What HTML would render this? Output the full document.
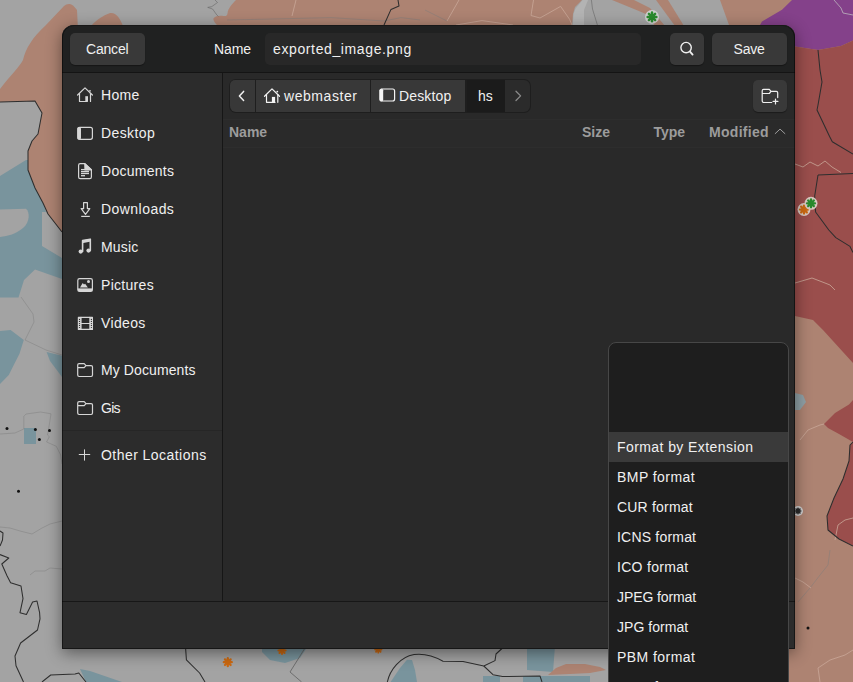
<!DOCTYPE html>
<html><head><meta charset="utf-8">
<style>
*{box-sizing:border-box;margin:0;padding:0}
html,body{width:853px;height:682px;overflow:hidden;background:#a3a3a3;font-family:"Liberation Sans",sans-serif;position:relative}
.a{position:absolute}
#map{position:absolute;left:0;top:0;width:853px;height:682px}
#dlg{position:absolute;left:62px;top:25px;width:733px;height:624px;background:#2c2c2c;border-radius:12px 12px 0 0;box-shadow:0 4px 16px rgba(0,0,0,.45)}
.t{position:absolute;color:#f0f0f0;font-size:14px;white-space:nowrap;line-height:16px}
</style></head><body>
<svg id="map" width="853" height="682" viewBox="0 0 853 682">
<rect x="0" y="0" width="853" height="682" fill="#a3a3a3"/>
<!-- right strip base salmon -->
<polygon fill="#ad8372" points="720,0 853,0 853,682 760,682 760,25 729,25"/>
<!-- purple -->
<polygon fill="#84418a" points="792,0 853,0 853,40.5 841,46 818,50 795,46.6 790,46 760,25 762,21.5 782,9.7"/>
<!-- red top -->
<polygon fill="#9a4e4c" points="795,46.6 818,50 841,46 853,40.5 853,363 823,330 813,320 795,316 780,300 780,46"/>
<!-- red right 2 -->
<polygon fill="#9a4e4c" points="824,424 835,413 849,404.6 853,400 853,442 839,434 828,428"/>
<polygon fill="#9a4e4c" points="853,442 850,445 849,461 843,479 834,498 827,516 828,530 839,539 853,546"/>
<!-- salmon top left A -->
<path fill="#ad8372" d="M69,4 Q72,3 77,10 L78,30 L120,30 L120,240 L62,232 L48,214 L43,203 L35,188 L28,170 L28,151 L32,141 L38,134 L42,113 L35,101 L0,102 L0,89 C10,76 20,66 23,60 C26,48 32,38 46,25 C52,19 58,12 64,6 Q66,4 69,4 Z"/>
<!-- salmon blob 2 -->
<path fill="#ad8372" d="M91,26 C96,20 104,15 110,13 C116,12 120,18 123,26 Z"/>
<!-- salmon top big -->
<path fill="#ad8372" d="M236,0 L582,0 L575,7 L573,14 L572,26 L218,26 C216,24 213,21 213.4,18.5 C215,16 219,15.5 222,15.8 C225,16.2 227.4,16.4 227.6,13 C227.8,9 232,4 236,0 Z"/>
<polygon fill="#b3b3b3" points="582.6,0 588,0 584,10 584,26 572.7,26 573.5,14 575.6,8.5"/>
<!-- salmon bands -->
<polygon fill="#ad8372" points="612,0 634,0 650,8 665,26 655,26 646,14 634,9"/>
<polygon fill="#ad8372" points="656,0 668,0 684,26 675,26"/>
<!-- blue left -->
<polygon fill="#79949d" points="0,176 26,160 28,160 28,170 35,188 43,203 46,212 42,212 42,246 62,258 62,279 35,269.5 24,280 18.5,297.6 0,297.6"/>
<path fill="#a3a3a3" d="M0,209.6 L26,208.7 C30,212 30,222 23,228 C16,234 8,236 0,237 Z"/>
<polygon fill="#79949d" points="0,331 10.6,330 23.8,340 19.4,354 14,364.5 8.8,375 0,384"/>
<polygon fill="#79949d" points="46.6,352 62,355.7 62,377 50,361"/>
<rect fill="#79949d" x="24" y="428" width="12" height="16"/>
<!-- bottom blues -->
<polygon fill="#79949d" points="80,669 90,671 122,682 86,682"/>
<polygon fill="#79949d" points="262,646 308,646 300,658 285,663 270,660 262,652"/>
<polygon fill="#79949d" points="390.6,682 400,668 407,659.7 412,660 415,670 417,682"/>
<polygon fill="#79949d" points="527,646 555,646 553,672 527,670"/>
<rect fill="#79949d" x="483" y="676" width="17" height="6"/>
<rect fill="#79949d" x="523" y="676" width="67" height="6"/>
<polygon fill="#ad8372" points="548,675 556,668 566,664 585,664 600,667 606,670 590,673 570,674"/>
<!-- thin lines -->
<g fill="none" stroke="#7d7d7d" stroke-width="1" stroke-opacity="0.45" stroke-linejoin="round">
<polyline points="227,20 260,19.3 331,17.6 384,21 401,17.6 420,20"/>
<polyline points="215,0 217.5,2.5 211.8,6.6 207.7,7.4 212.6,9 216.7,14.8 218.4,16.4" stroke="#555"/>
<polyline points="425,10 447,21"/>
<polyline points="591.4,0 592.5,9 597.4,25" stroke="#555"/>
<polyline points="21,297 33,314 34,322 30,330 25,340 46,350 62,355"/>
<polyline points="0,434 15,433 23.8,429 23.8,416.4 26,414 40.5,412 51,413.8 48.4,430.5 47.5,435 49.3,436.7 46.6,442 56.3,446.3 60.7,455 62,464"/>
<polyline points="0,527 10,528 20,531 32,534 42,528 50,524 62,521"/>
<polyline points="30,575 35,571 45,571 50,568 62,569"/>
<polyline points="830,550 828,565 820,575 810,588 798,602"/>
</g>
<g fill="none" stroke="#c9a898" stroke-width="1" stroke-opacity="0.8" stroke-linejoin="round">
<polyline points="296,0 292,16"/>
<polyline points="459,0 447,21"/>
<polyline points="456,25 482,20.6 513,25"/>
<polyline points="533.5,0 531,15.5 540,18 560.6,6.4 569.6,19.3 572,25"/>
<polyline points="795,164 803,167 810,162 818,166 825,161 832,167 841,172.5"/>
<polyline points="795,283 812,278 825,283 830,285 835,290"/>
<polyline points="835,540 838,525 845,520 853,518"/>
<polyline points="800,440 808,430 820,425 824,424"/>
<polyline points="853,650 845,655 830,660 818,668 820,682"/>
<polyline points="795,578 803,582 811,588"/>
</g>
<g fill="none" stroke="#c4c4c4" stroke-width="1" stroke-opacity="0.7">
<polyline points="834,0 841,8 843,13 853,15"/>
</g>
<polygon fill="#8fa0a6" points="795,393 803,395 806,402 800,410 795,410"/>
<!-- black lines -->
<g fill="none" stroke="#2e2e2e" stroke-width="1.05" stroke-linejoin="round">
<polyline points="0,102 35,101 42,113 38,134 32,141 28,151 28,170 35,188 43,203 48,214 62,232"/>
<polyline points="0,531 3,533 2.5,540 0,546"/>
<polyline points="0,554.6 8.8,558 1.8,564 7,575.7 10.6,582.7 21,586 23,598.6 20,612.7 26.4,614.4 32.6,602 37,601 39.6,612.7 40,618.8 37.5,630 20.6,643 15,656 16,665.7 23.5,682"/>
<polyline points="42,682 50.7,675 75,674 78.8,673 86,682"/>
<polyline points="185.6,648 186.4,659.8 199.6,673 205,682"/>
<path d="M387.3,682 C390,670 400,657 414,654.6 C422,653.6 432,655 443,661.3 L463,661.6 L483.8,666 L495,660.6 L496,654 L502.5,648"/>
<polyline points="483.8,666 493,674.7 502.5,676.6 540,676 542,682"/>
<polyline points="398,0 399,6 391,9.4 384,25"/>
<polyline points="818,50 820,70 822,82 818,105 817,110 829.6,136.4 832.3,141.7 853,154"/>
<polyline points="818,175 853,173.4"/>
<polyline points="818,175 814.7,196 815.6,212 828.8,230 835.8,237.6 850,246.4 853,252.6"/>
<polyline points="853,442 850,445 849,461 843,479 834,498 827,516 828,530 839,539 853,546"/>
</g>
<g fill="none" stroke="#6e6e6e" stroke-width="1">
<polyline points="305,648 290,672 301.6,682"/>
</g>
<!-- asterisks -->
<circle cx="227.8" cy="662.2" r="2.75" fill="#cc6a12"/><g stroke="#cc6a12" stroke-width="2.25" stroke-linecap="round"><line x1="227.8" y1="662.2" x2="231.80" y2="662.20"/><line x1="227.8" y1="662.2" x2="230.63" y2="665.03"/><line x1="227.8" y1="662.2" x2="227.80" y2="666.20"/><line x1="227.8" y1="662.2" x2="224.97" y2="665.03"/><line x1="227.8" y1="662.2" x2="223.80" y2="662.20"/><line x1="227.8" y1="662.2" x2="224.97" y2="659.37"/><line x1="227.8" y1="662.2" x2="227.80" y2="658.20"/><line x1="227.8" y1="662.2" x2="230.63" y2="659.37"/></g>
<circle cx="282" cy="650.5" r="2.48" fill="#cc6a12"/><g stroke="#cc6a12" stroke-width="2.02" stroke-linecap="round"><line x1="282" y1="650.5" x2="285.60" y2="650.50"/><line x1="282" y1="650.5" x2="284.55" y2="653.05"/><line x1="282" y1="650.5" x2="282.00" y2="654.10"/><line x1="282" y1="650.5" x2="279.45" y2="653.05"/><line x1="282" y1="650.5" x2="278.40" y2="650.50"/><line x1="282" y1="650.5" x2="279.45" y2="647.95"/><line x1="282" y1="650.5" x2="282.00" y2="646.90"/><line x1="282" y1="650.5" x2="284.55" y2="647.95"/></g>
<circle cx="378.3" cy="649.5" r="2.20" fill="#cc6a12"/><g stroke="#cc6a12" stroke-width="1.80" stroke-linecap="round"><line x1="378.3" y1="649.5" x2="381.50" y2="649.50"/><line x1="378.3" y1="649.5" x2="380.56" y2="651.76"/><line x1="378.3" y1="649.5" x2="378.30" y2="652.70"/><line x1="378.3" y1="649.5" x2="376.04" y2="651.76"/><line x1="378.3" y1="649.5" x2="375.10" y2="649.50"/><line x1="378.3" y1="649.5" x2="376.04" y2="647.24"/><line x1="378.3" y1="649.5" x2="378.30" y2="646.30"/><line x1="378.3" y1="649.5" x2="380.56" y2="647.24"/></g>
<circle cx="652" cy="16.9" r="7" fill="#cfcfcf"/><circle cx="652" cy="16.9" r="3.03" fill="#2a8a2e"/><g stroke="#2a8a2e" stroke-width="2.48" stroke-linecap="round"><line x1="652" y1="16.9" x2="656.40" y2="16.90"/><line x1="652" y1="16.9" x2="655.11" y2="20.01"/><line x1="652" y1="16.9" x2="652.00" y2="21.30"/><line x1="652" y1="16.9" x2="648.89" y2="20.01"/><line x1="652" y1="16.9" x2="647.60" y2="16.90"/><line x1="652" y1="16.9" x2="648.89" y2="13.79"/><line x1="652" y1="16.9" x2="652.00" y2="12.50"/><line x1="652" y1="16.9" x2="655.11" y2="13.79"/></g>
<circle cx="804" cy="209.5" r="6.5" fill="#d8c8c0"/><circle cx="804" cy="209.5" r="2.75" fill="#cc6a12"/><g stroke="#cc6a12" stroke-width="2.25" stroke-linecap="round"><line x1="804" y1="209.5" x2="808.00" y2="209.50"/><line x1="804" y1="209.5" x2="806.83" y2="212.33"/><line x1="804" y1="209.5" x2="804.00" y2="213.50"/><line x1="804" y1="209.5" x2="801.17" y2="212.33"/><line x1="804" y1="209.5" x2="800.00" y2="209.50"/><line x1="804" y1="209.5" x2="801.17" y2="206.67"/><line x1="804" y1="209.5" x2="804.00" y2="205.50"/><line x1="804" y1="209.5" x2="806.83" y2="206.67"/></g>
<circle cx="811" cy="203.3" r="6.5" fill="#d8c8c0"/><circle cx="811" cy="203.3" r="2.75" fill="#2a8a2e"/><g stroke="#2a8a2e" stroke-width="2.25" stroke-linecap="round"><line x1="811" y1="203.3" x2="815.00" y2="203.30"/><line x1="811" y1="203.3" x2="813.83" y2="206.13"/><line x1="811" y1="203.3" x2="811.00" y2="207.30"/><line x1="811" y1="203.3" x2="808.17" y2="206.13"/><line x1="811" y1="203.3" x2="807.00" y2="203.30"/><line x1="811" y1="203.3" x2="808.17" y2="200.47"/><line x1="811" y1="203.3" x2="811.00" y2="199.30"/><line x1="811" y1="203.3" x2="813.83" y2="200.47"/></g>
<circle cx="798" cy="511" r="5" fill="#cfcfcf"/><circle cx="798" cy="511" r="1.93" fill="#2a2a2a"/><g stroke="#2a2a2a" stroke-width="1.57" stroke-linecap="round"><line x1="798" y1="511" x2="800.80" y2="511.00"/><line x1="798" y1="511" x2="799.98" y2="512.98"/><line x1="798" y1="511" x2="798.00" y2="513.80"/><line x1="798" y1="511" x2="796.02" y2="512.98"/><line x1="798" y1="511" x2="795.20" y2="511.00"/><line x1="798" y1="511" x2="796.02" y2="509.02"/><line x1="798" y1="511" x2="798.00" y2="508.20"/><line x1="798" y1="511" x2="799.98" y2="509.02"/></g>
<g fill="#111">
<circle cx="7" cy="428.5" r="1.5"/><circle cx="35.4" cy="429.5" r="1.5"/><circle cx="49.5" cy="430.5" r="1.5"/><circle cx="39.4" cy="439.4" r="1.5"/><circle cx="18.5" cy="491.3" r="1.5"/><circle cx="808" cy="628" r="1.5"/>
</g>
</svg>
<div id="dlg"></div>
<div class="a" style="left:62px;top:25px;width:733px;height:47px;background:#202121;border-radius:12px 12px 0 0;box-shadow:inset 0 2px 0 -1px #303030"></div>
<div class="a" style="left:62px;top:72px;width:733px;height:1px;background:#141414;"></div>
<div class="a" style="left:70px;top:33px;width:75px;height:32px;background:#393939;border-radius:5px;box-shadow:0 1px 1px rgba(0,0,0,.35)"></div>
<div class="t" style="left:86px;top:41px;letter-spacing:-0.2px">Cancel</div>
<div class="t" style="left:214px;top:41px;letter-spacing:-0.1px">Name</div>
<div class="a" style="left:265px;top:33px;width:376px;height:32px;background:#282828;border-radius:5px"></div>
<div class="t" style="left:273px;top:41px;letter-spacing:0.62px">exported_image.png</div>
<div class="a" style="left:670px;top:33px;width:34px;height:32px;background:#393939;border-radius:5px;box-shadow:0 1px 1px rgba(0,0,0,.35)"></div>
<div class="a" style="left:712px;top:33px;width:75px;height:32px;background:#393939;border-radius:5px;box-shadow:0 1px 1px rgba(0,0,0,.35)"></div>
<div class="t" style="left:733.5px;top:41px;letter-spacing:-0.2px">Save</div>
<div class="a" style="left:62px;top:73px;width:160px;height:528px;background:#2c2c2c;"></div>
<div class="a" style="left:222px;top:73px;width:1px;height:528px;background:#161616;"></div>
<div class="a" style="left:62px;top:430px;width:160px;height:1px;background:#262626;"></div>
<div class="t" style="left:101px;top:87px;letter-spacing:0.35px">Home</div>
<div class="t" style="left:101px;top:125px;letter-spacing:0.4px">Desktop</div>
<div class="t" style="left:101px;top:163px;letter-spacing:0.27px">Documents</div>
<div class="t" style="left:101px;top:201px;letter-spacing:0.45px">Downloads</div>
<div class="t" style="left:101px;top:239px;letter-spacing:0.15px">Music</div>
<div class="t" style="left:101px;top:277px;letter-spacing:0.3px">Pictures</div>
<div class="t" style="left:101px;top:315px;letter-spacing:0.35px">Videos</div>
<div class="t" style="left:101px;top:362px;letter-spacing:0.1px">My Documents</div>
<div class="t" style="left:101px;top:400px;letter-spacing:-0.7px">Gis</div>
<div class="t" style="left:101px;top:447px;letter-spacing:0.45px">Other Locations</div>
<div class="a" style="left:223px;top:73px;width:572px;height:528px;background:#292929;"></div>
<div class="a" style="left:229px;top:79px;width:302px;height:34px;background:#1e1e1e;border-radius:7px"></div>
<div class="a" style="left:230px;top:80px;width:25px;height:32px;background:#383838;border-radius:5px 0 0 6px"></div>
<div class="a" style="left:256px;top:80px;width:114px;height:32px;background:#383838;"></div>
<div class="a" style="left:371px;top:80px;width:94px;height:32px;background:#383838;"></div>
<div class="a" style="left:467px;top:80px;width:38px;height:32px;background:#1b1b1b;"></div>
<div class="a" style="left:505px;top:80px;width:25px;height:32px;background:#2b2b2b;border-radius:0 6px 6px 0"></div>
<div class="t" style="left:284px;top:88px;letter-spacing:0.56px">webmaster</div>
<div class="t" style="left:399px;top:88px;letter-spacing:0.15px">Desktop</div>
<div class="t" style="left:478px;top:88px">hs</div>
<div class="a" style="left:753px;top:80px;width:34px;height:32px;background:#393939;border-radius:5px;box-shadow:0 1px 1px rgba(0,0,0,.35)"></div>
<div class="a" style="left:223px;top:119px;width:572px;height:1px;background:#2d2d2d;"></div>
<div class="a" style="left:223px;top:120px;width:572px;height:27px;background:#2a2a2a;"></div>
<div class="a" style="left:223px;top:147px;width:572px;height:1px;background:#2d2d2d;"></div>
<div class="t" style="left:229px;top:124px;color:#9c9c9c;font-weight:bold">Name</div>
<div class="t" style="left:582px;top:124px;color:#9c9c9c;font-weight:bold">Size</div>
<div class="t" style="left:653.5px;top:124px;color:#9c9c9c;font-weight:bold">Type</div>
<div class="t" style="left:709px;top:124px;letter-spacing:0.3px;color:#9c9c9c;font-weight:bold">Modified</div>
<div class="a" style="left:62px;top:601px;width:733px;height:1px;background:#171717;"></div>
<div class="a" style="left:62px;top:602px;width:733px;height:46px;background:#2c2c2c;"></div>
<svg class="a" style="left:0;top:0" width="853" height="682" viewBox="0 0 853 682">
<g fill="none" stroke="#d6d6d6" stroke-width="1.2" stroke-linejoin="round" stroke-linecap="round">
<!-- home -->
<g id="house">
<polyline points="77.6,95 85,87.9 92.4,95"/>
<polyline points="79.5,93.5 79.5,101.5 87,101.5"/>
<line x1="90.5" y1="93.5" x2="90.5" y2="101.5"/>
<rect x="85.3" y="96.2" width="2.7" height="5.6" fill="#d6d6d6" stroke="none"/>
<circle cx="90" cy="90.8" r="0.9" fill="#d6d6d6" stroke="none"/>
</g>
<!-- desktop -->
<rect x="77.8" y="127.3" width="14.6" height="12" rx="2"/>
<rect x="77.4" y="127" width="3.6" height="12.6" rx="1.5" fill="#d6d6d6" stroke="none"/>
<!-- documents -->
<path d="M80.2,163.6 H84.8 L91.4,169.6 V177 Q91.4,178.6 89.8,178.6 H80.2 Q78.6,178.6 78.6,177 V165.2 Q78.6,163.6 80.2,163.6 Z"/>
<path d="M84.8,163.6 L91.4,170 H85 Z" fill="#d6d6d6"/>
<g stroke-width="1.3" stroke-linecap="butt"><line x1="81" y1="169.6" x2="89" y2="169.6"/><line x1="81" y1="171.6" x2="89" y2="171.6"/><line x1="81" y1="173.5" x2="89" y2="173.5"/><line x1="81" y1="175.7" x2="85" y2="175.7"/></g>
<!-- downloads -->
<path d="M83.6,202.6 H87.4 V208.6 H89.8 L85.5,214.4 L81.2,208.6 H83.6 Z"/>
<line x1="81.2" y1="216.4" x2="89.8" y2="216.4" stroke-linecap="butt"/>
<!-- music -->
<path d="M82.6,251.5 V240.6 L90.3,239.2 V250.6" stroke-width="1.6"/>
<path d="M82,240.4 L91,238.8 V241.6 L82,243.2 Z" fill="#d6d6d6" stroke="none"/>
<circle cx="80.7" cy="251.6" r="2.1" fill="#d6d6d6" stroke="none"/>
<circle cx="88.5" cy="250.6" r="2.1" fill="#d6d6d6" stroke="none"/>
<!-- pictures -->
<path d="M79.6,278.6 H90.6 Q92.4,278.6 92.4,280.4 V289.6 Q92.4,291.4 90.6,291.4 H79.6 Q77.8,291.4 77.8,289.6 V280.4 Q77.8,278.6 79.6,278.6 Z"/>
<rect x="77.8" y="288.4" width="14.6" height="3" fill="#d6d6d6" stroke="none"/>
<path d="M80,287.6 L82.7,282.9 L84,284.6 L85.1,283.7 L87.9,287.6 Z" fill="#d6d6d6" stroke="none"/>
<circle cx="88.5" cy="281.4" r="1.5" fill="#d6d6d6" stroke="none"/>
<!-- videos -->
<rect x="78.4" y="317.4" width="14" height="12" />
<line x1="81" y1="317.4" x2="81" y2="329.4"/><line x1="89.9" y1="317.4" x2="89.9" y2="329.4"/>
<line x1="81" y1="323.5" x2="89.9" y2="323.5"/>
<g stroke="none" fill="#d6d6d6"><rect x="78" y="317" width="2.9" height="12.9"/><rect x="90" y="317" width="2.9" height="12.9"/></g>
<g stroke="none" fill="#2c2c2c"><circle cx="79.5" cy="319.4" r="0.6"/><circle cx="79.5" cy="321.4" r="0.6"/><circle cx="79.5" cy="323.5" r="0.6"/><circle cx="79.5" cy="325.4" r="0.6"/><circle cx="79.5" cy="327.5" r="0.6"/>
<circle cx="91.4" cy="319.4" r="0.6"/><circle cx="91.4" cy="321.4" r="0.6"/><circle cx="91.4" cy="323.5" r="0.6"/><circle cx="91.4" cy="325.4" r="0.6"/><circle cx="91.4" cy="327.5" r="0.6"/></g>
<!-- folders -->
<path id="fold" d="M77.7,365 Q77.7,363.6 79.1,363.6 H84.2 L86,365.6 H91.1 Q92.5,365.6 92.5,367 V375.1 Q92.5,376.5 91.1,376.5 H79.1 Q77.7,376.5 77.7,375.1 Z M77.7,367.6 H84.2 L86,365.6"/>
<path d="M77.7,403 Q77.7,401.6 79.1,401.6 H84.2 L86,403.6 H91.1 Q92.5,403.6 92.5,405 V413.1 Q92.5,414.5 91.1,414.5 H79.1 Q77.7,414.5 77.7,413.1 Z M77.7,405.6 H84.2 L86,403.6"/>
<!-- plus -->
<g stroke-width="1" stroke-linecap="butt"><line x1="78.8" y1="454.5" x2="90.2" y2="454.5"/><line x1="84.5" y1="449.4" x2="84.5" y2="460.6"/></g>
<g stroke="#f4f4f4"><!-- pathbar house -->
<polyline points="264.5,96.3 272,88.9 279.5,96.3"/>
<polyline points="266.5,94.5 266.5,102.3 275,102.3"/>
<line x1="277.8" y1="94.5" x2="277.8" y2="102.3"/>
<rect x="271.9" y="96.9" width="3.2" height="5.9" fill="#f4f4f4" stroke="none"/>
<circle cx="277.3" cy="91.6" r="0.9" fill="#f4f4f4" stroke="none"/>
<!-- pathbar desktop -->
<rect x="380" y="89" width="14.6" height="12" rx="2"/>
<rect x="379.6" y="88.7" width="3.6" height="12.6" rx="1.5" fill="#f4f4f4" stroke="none"/>
</g><!-- chevrons -->
<g stroke="#f0f0f0"><polyline points="243.6,91.4 239.4,96 243.6,100.5" stroke-width="1.5"/>
<polyline points="516,91.2 520.6,95.9 516,100.5" stroke="#8a8a8a" stroke-width="1.3"/>
<!-- search -->
<circle cx="686.1" cy="47.6" r="5.2" stroke-width="1.4"/>
<line x1="690" y1="51.6" x2="692.6" y2="54.6" stroke-width="1.8"/>
<!-- new folder -->
<path d="M771.7,102.5 H763.6 Q762.2,102.5 762.2,101.1 V90.7 Q762.2,89.3 763.6,89.3 H769.3 L771,91.4 H776.3 Q777.7,91.4 777.7,92.8 V97.6 M762.2,93.5 H769.3 L771,91.4"/>
<line x1="773.1" y1="101.4" x2="777.9" y2="101.4"/><line x1="775.5" y1="99" x2="775.5" y2="103.9"/>
</g><!-- caret -->
<polyline points="775.2,133.6 780,129.1 784.9,133.6" stroke="#9c9c9c" stroke-width="1"/>
</g>
</svg>
<div class="a" style="left:62px;top:25px;width:733px;height:624px;border:1px solid rgba(0,0,0,.5);border-radius:12px 12px 0 0"></div>
<div class="a" style="left:608px;top:342px;width:181px;height:360px;background:#1e1e1e;border:1px solid #474747;border-radius:8px;overflow:hidden"></div>
<div class="a" style="left:609px;top:432px;width:179px;height:30px;background:#3a3a3a;"></div>
<div class="t" style="left:617px;top:439px;letter-spacing:0.42px">Format by Extension</div>
<div class="t" style="left:617px;top:469px;letter-spacing:0.45px">BMP format</div>
<div class="t" style="left:617px;top:499px;letter-spacing:0.2px">CUR format</div>
<div class="t" style="left:617px;top:529px;letter-spacing:0.2px">ICNS format</div>
<div class="t" style="left:617px;top:559px;letter-spacing:0.3px">ICO format</div>
<div class="t" style="left:617px;top:589px;letter-spacing:-0.1px">JPEG format</div>
<div class="t" style="left:617px;top:619px;letter-spacing:0.05px">JPG format</div>
<div class="t" style="left:617px;top:649px;letter-spacing:0.45px">PBM format</div>
<div class="t" style="left:617px;top:679px;letter-spacing:0.3px">PGM format</div>
</body></html>
